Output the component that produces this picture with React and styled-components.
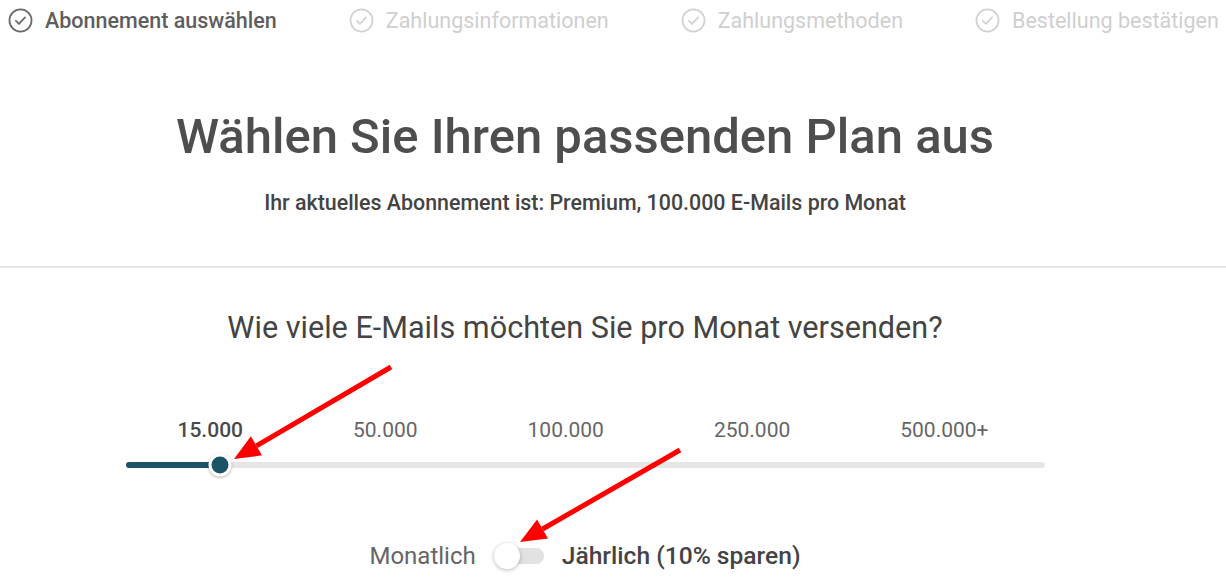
import React from 'react';
import styled, { createGlobalStyle } from 'styled-components';

const GlobalStyle = createGlobalStyle`
  html, body {
    margin: 0;
    padding: 0;
    background: #fff;
    font-family: Roboto, "Liberation Sans", sans-serif;
    overflow: hidden;
  }
`;

const Page = styled.div`
  position: relative;
  width: 1226px;
  height: 587px;
`;

const Steps = styled.nav`
  display: flex;
  align-items: center;
  gap: 72px;
  padding-left: 8px;
  height: 40px;
`;

const Step = styled.div`
  display: flex;
  align-items: center;
  gap: 12px;
  font-size: 21.5px;
  font-weight: ${p => (p.active ? 500 : 400)};
  color: ${p => (p.active ? '#5e5e5e' : '#cfcfcf')};
  white-space: nowrap;
`;

const Header = styled.header`
  text-align: center;
  padding: 68px 56px 49px 0;
  border-bottom: 2px solid #e8e8e8;
`;

const Title = styled.h1`
  margin: 0;
  font-size: 49px;
  font-weight: 500;
  color: #4e4e4e;
  line-height: 58px;
`;

const Subtitle = styled.p`
  margin: 23px 0 0;
  font-size: 21.4px;
  font-weight: 500;
  color: #444;
  line-height: 28px;
`;

const Main = styled.main`
  width: 1170px;
  display: flex;
  flex-direction: column;
  align-items: center;
`;

const Question = styled.h2`
  margin: 42px 0 0;
  font-size: 30.6px;
  font-weight: 400;
  color: #444;
  line-height: 36px;
`;

const Slider = styled.div`
  width: 919px;
  margin-top: 72px;
`;

const Ticks = styled.div`
  display: flex;
  justify-content: space-between;
  padding: 0 56px 0 52px;
  line-height: 24px;
`;

const Tick = styled.span`
  font-size: 21px;
  font-weight: ${p => (p.active ? 500 : 400)};
  color: ${p => (p.active ? '#4a4a4a' : '#666')};
`;

const Track = styled.div`
  position: relative;
  height: 6px;
  margin-top: 20px;
  border-radius: 3px;
  background: #e6e6e6;
`;

const Fill = styled.div`
  height: 100%;
  border-radius: 3px;
  background: #1b5466;
`;

const Thumb = styled.div`
  position: absolute;
  top: 50%;
  width: 17px;
  height: 17px;
  border-radius: 50%;
  background: #1b5466;
  border: 3px solid #fff;
  box-shadow: 0 1px 3px rgba(0, 0, 0, 0.3);
  transform: translate(-50%, -50%);
`;

const ToggleRow = styled.div`
  display: flex;
  align-items: center;
  gap: 18px;
  margin-top: 74px;
  font-size: 24px;
  line-height: 28px;
`;

const ToggleLabel = styled.span`
  color: ${p => (p.active ? '#444' : '#666')};
  font-weight: ${p => (p.active ? 500 : 400)};
  font-size: ${p => (p.active ? '24.6px' : '24px')};
`;

const Switch = styled.div`
  position: relative;
  width: 50px;
  height: 16px;
  border-radius: 8px;
  background: #e2e2e2;
`;

const SwitchKnob = styled.div`
  position: absolute;
  left: 0;
  top: 50%;
  width: 26px;
  height: 26px;
  border-radius: 50%;
  background: #fff;
  box-shadow: 0 1px 4px rgba(0, 0, 0, 0.28);
  transform: translateY(-50%);
`;

const Overlay = styled.svg`
  position: absolute;
  inset: 0;
  pointer-events: none;
`;

const CheckIcon = ({ color }) => (
  <svg width="25" height="25" viewBox="0 0 24 24" fill="none" stroke={color} strokeWidth="1.7">
    <circle cx="12" cy="12" r="10.6" />
    <path d="M7.6 12.4l2.9 2.9 5.9-6.2" strokeLinecap="round" strokeLinejoin="round" />
  </svg>
);

const steps = [
  'Abonnement auswählen',
  'Zahlungsinformationen',
  'Zahlungsmethoden',
  'Bestellung bestätigen',
];

const ticks = ['15.000', '50.000', '100.000', '250.000', '500.000+'];

const Arrow = ({ x1, y1, x2, y2 }) => {
  const a = Math.atan2(y2 - y1, x2 - x1);
  const len = 26;
  const w = 11;
  const bx = x2 - Math.cos(a) * len;
  const by = y2 - Math.sin(a) * len;
  const px = -Math.sin(a) * w;
  const py = Math.cos(a) * w;
  return (
    <g>
      <line x1={x1} y1={y1} x2={bx} y2={by} stroke="#f00" strokeWidth="5" />
      <polygon points={`${x2},${y2} ${bx + px},${by + py} ${bx - px},${by - py}`} fill="#f00" />
    </g>
  );
};

const App = () => (
  <Page>
    <GlobalStyle />
    <Steps>
      {steps.map((s, i) => (
        <Step key={s} active={i === 0}>
          <CheckIcon color={i === 0 ? '#6a6a6a' : '#d2d2d2'} />
          {s}
        </Step>
      ))}
    </Steps>
    <Header>
      <Title>Wählen Sie Ihren passenden Plan aus</Title>
      <Subtitle>Ihr aktuelles Abonnement ist: Premium, 100.000 E-Mails pro Monat</Subtitle>
    </Header>
    <Main>
      <Question>Wie viele E-Mails möchten Sie pro Monat versenden?</Question>
      <Slider>
        <Ticks>
          {ticks.map((t, i) => (
            <Tick key={t} active={i === 0}>{t}</Tick>
          ))}
        </Ticks>
        <Track>
          <Fill style={{ width: '94px' }} />
          <Thumb style={{ left: '94px' }} />
        </Track>
      </Slider>
      <ToggleRow>
        <ToggleLabel>Monatlich</ToggleLabel>
        <Switch>
          <SwitchKnob />
        </Switch>
        <ToggleLabel active>Jährlich (10% sparen)</ToggleLabel>
      </ToggleRow>
    </Main>
    <Overlay width="1226" height="587">
      <Arrow x1={391} y1={367} x2={234} y2={459} />
      <Arrow x1={680} y1={450} x2={520} y2={542} />
    </Overlay>
  </Page>
);

export default App;
